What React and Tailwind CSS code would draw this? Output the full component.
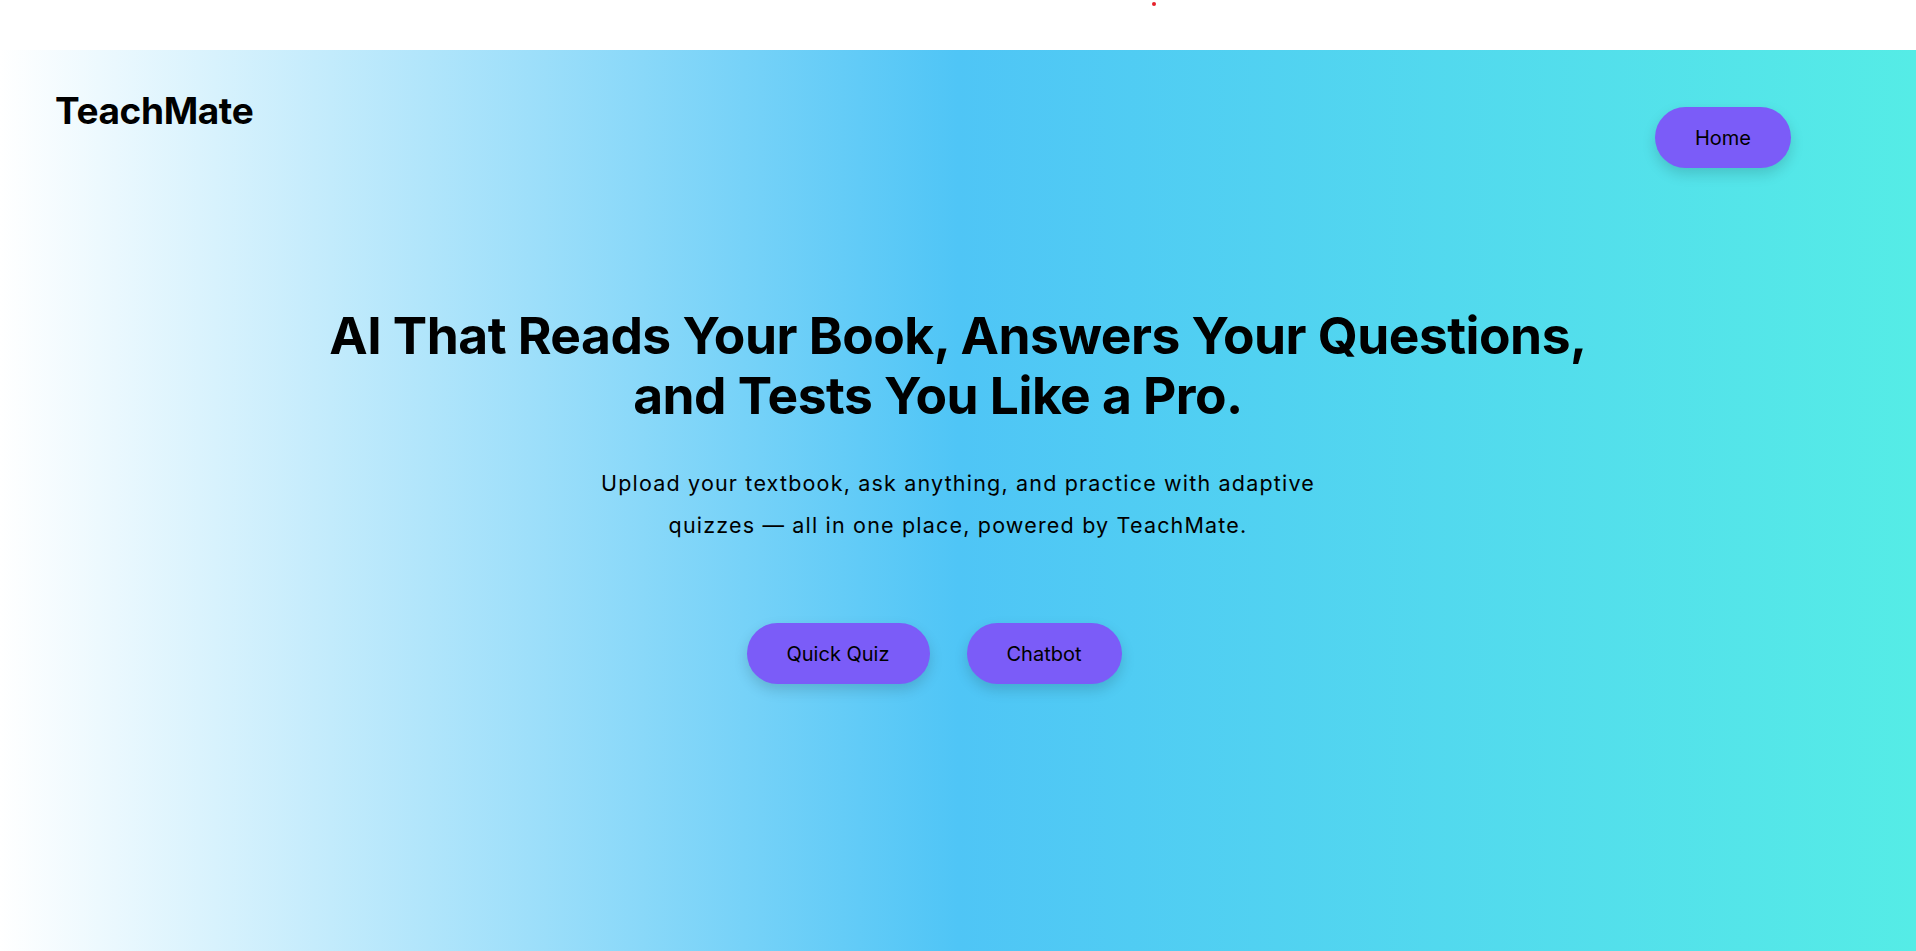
export default function App() {
  return (
    <div className="min-h-screen bg-white font-['Inter',sans-serif] text-black">
      {/* top strip */}
      <div className="relative h-[50px] bg-white">
        <span className="absolute left-[1152px] top-[2px] w-[4px] h-[4px] rounded-full bg-[#e5202a]" />
      </div>

      <section className="min-h-[901px] bg-[linear-gradient(to_right,#ffffff_0%,#4fc5f6_50%,#55ece6_100%)]">
        <nav className="flex items-start justify-between pl-[55px] pr-[125px] pt-[41px]">
          <h1 className="text-[37px] leading-[40px] font-bold tracking-[-0.01em]">TeachMate</h1>
          <button className="mt-[16px] h-[61px] px-10 rounded-full bg-[#7b5cf8] text-[20px] text-black shadow-[0_6px_14px_rgba(0,0,0,0.15)]">
            Home
          </button>
        </nav>

        <main className="flex flex-col items-center text-center pt-[137px]">
          <h2 className="max-w-[1400px] text-[51.5px] leading-[60px] font-bold tracking-[-0.01em]">
            <span className="block">AI That Reads Your Book, Answers Your Questions,</span>
            <span className="block pr-[40px]">and Tests You Like a Pro.</span>
          </h2>
          <p className="mt-[37px] max-w-[740px] text-[21.5px] leading-[42px] tracking-[0.055em]">
            Upload your textbook, ask anything, and practice with adaptive quizzes — all in one place, powered by TeachMate.
          </p>
          <div className="mt-[77px] flex gap-[37px] pr-[48px]">
            <button className="h-[61px] px-10 rounded-full bg-[#7b5cf8] text-[20px] text-black shadow-[0_6px_14px_rgba(0,0,0,0.15)]">
              Quick Quiz
            </button>
            <button className="h-[61px] px-10 rounded-full bg-[#7b5cf8] text-[20px] text-black shadow-[0_6px_14px_rgba(0,0,0,0.15)]">
              Chatbot
            </button>
          </div>
        </main>
      </section>
    </div>
  )
}
